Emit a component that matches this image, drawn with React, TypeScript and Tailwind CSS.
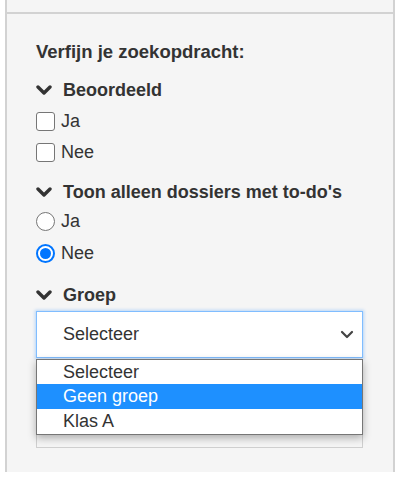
import React from "react";

function Chevron() {
  return (
    <svg width="16" height="11" viewBox="0 0 16 11" className="shrink-0">
      <polyline
        points="2,2 8,8 14,2"
        fill="none"
        stroke="#333"
        strokeWidth="3.4"
        strokeLinecap="round"
        strokeLinejoin="round"
      />
    </svg>
  );
}

function Checkbox({ label }: { label: string }) {
  return (
    <div className="flex items-center h-[31px]">
      <span className="w-[19px] h-[19px] border-[1.5px] border-[#767676] rounded-[3px] bg-white box-border" />
      <span className="ml-[6px] text-[18px] text-[#333]">{label}</span>
    </div>
  );
}

function Radio({ label, checked }: { label: string; checked?: boolean }) {
  return (
    <div className="flex items-center h-[32px]">
      {checked ? (
        <span className="w-[19px] h-[19px] rounded-full border-[2px] border-[#0075ff] bg-white flex items-center justify-center box-border">
          <span className="w-[11px] h-[11px] rounded-full bg-[#0075ff]" />
        </span>
      ) : (
        <span className="w-[19px] h-[19px] rounded-full border-[1.5px] border-[#767676] bg-white box-border" />
      )}
      <span className="ml-[6px] text-[18px] text-[#333]">{label}</span>
    </div>
  );
}

function Heading({ text }: { text: string }) {
  return (
    <div className="flex items-center h-[22px]">
      <Chevron />
      <span className="ml-[11px] text-[18px] font-bold text-[#333]">{text}</span>
    </div>
  );
}

export default function App() {
  return (
    <div
      className="w-[406px] h-[481px] bg-white overflow-hidden"
      style={{ fontFamily: '"Liberation Sans", Arial, sans-serif' }}
    >
      <div className="ml-[5px] w-[390px] h-[472px] border-x-2 border-[#d2d2d2] bg-[#f5f5f5]">
        <div className="h-[14px] border-b-2 border-[#d2d2d2]" />
        <div className="pl-[29px] pr-[28px]">
          <div className="mt-[27px] text-[18.5px] font-bold text-[#333] leading-[21px]">
            Verfijn je zoekopdracht:
          </div>
          <div className="mt-[17px]">
            <Heading text="Beoordeeld" />
            <div className="mt-[5px]">
              <Checkbox label="Ja" />
              <Checkbox label="Nee" />
            </div>
          </div>
          <div className="mt-[13px]">
            <Heading text="Toon alleen dossiers met to-do's" />
            <div className="mt-[2px]">
              <Radio label="Ja" />
              <Radio label="Nee" checked />
            </div>
          </div>
          <div className="mt-[15px]">
            <Heading text="Groep" />
            <div className="relative mt-[5px]">
              <div className="h-[47px] w-[327px] bg-white border border-[#80bdff] shadow-[0_0_3px_1px_rgba(0,123,255,0.25)] flex items-center pl-[26px] pr-[8px] justify-between">
                <span className="text-[18px] text-[#333]">Selecteer</span>
                <svg width="14" height="9" viewBox="0 0 14 9">
                  <polyline
                    points="2,2 7,7 12,2"
                    fill="none"
                    stroke="#444"
                    strokeWidth="2.2"
                    strokeLinecap="round"
                    strokeLinejoin="round"
                  />
                </svg>
              </div>
              <div className="mt-[30px] h-[60px] w-[327px] border border-[#cfcfcf] border-t-0" />
              <div className="absolute left-0 top-[48px] w-[327px] bg-white border border-[#767676] shadow-[0_3px_8px_rgba(0,0,0,0.3)]">
                <div className="h-[24px] flex items-center pl-[26px] text-[18px] text-[#333]">Selecteer</div>
                <div className="h-[25px] flex items-center pl-[26px] text-[18px] text-white bg-[#1e90ff]">Geen groep</div>
                <div className="h-[25px] flex items-center pl-[26px] text-[18px] text-[#333]">Klas A</div>
              </div>
            </div>
          </div>
        </div>
      </div>
    </div>
  );
}
